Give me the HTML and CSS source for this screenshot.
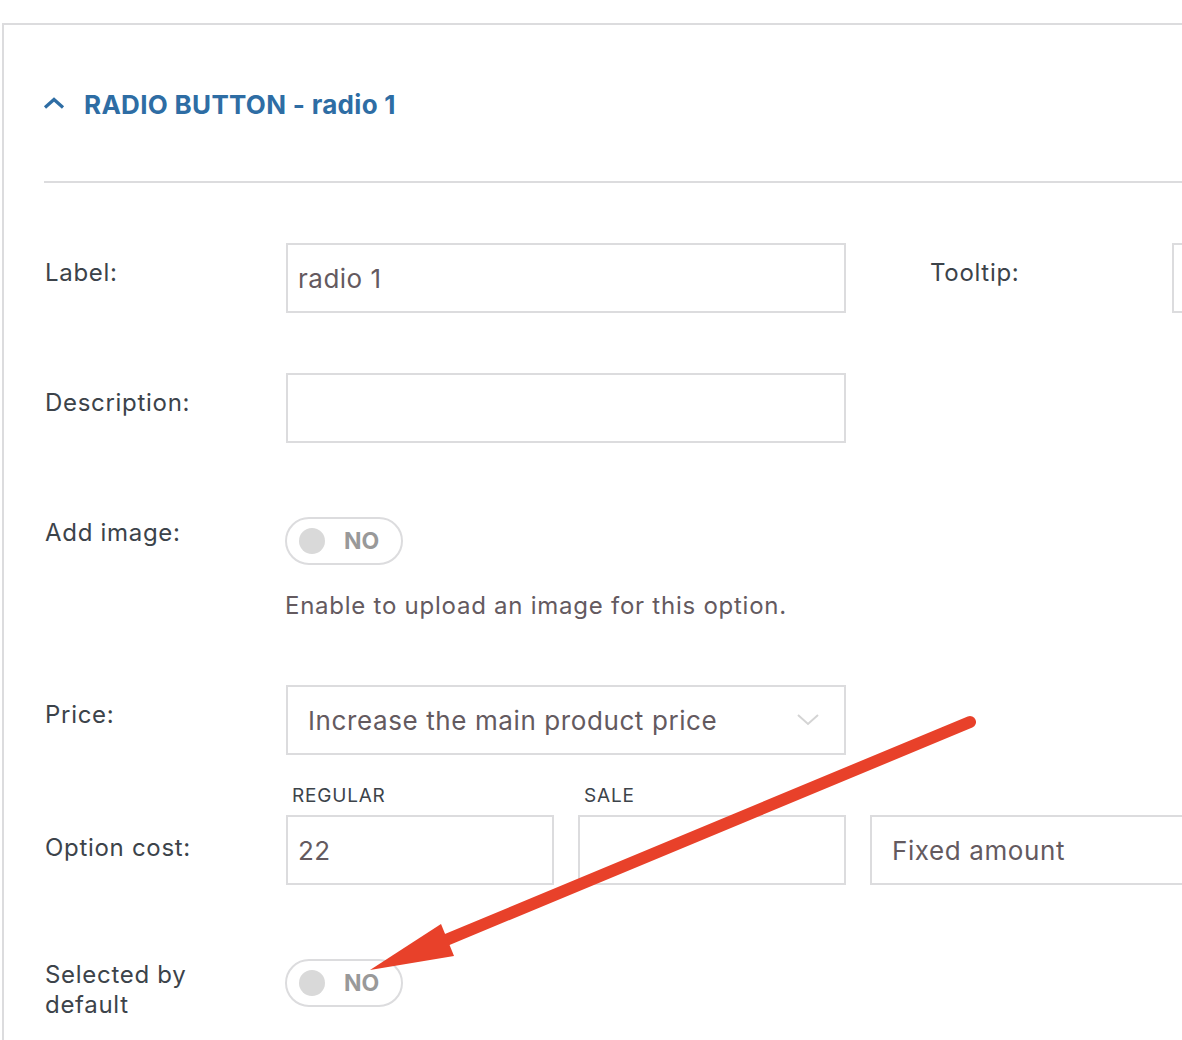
FILE: index.html
```html
<!DOCTYPE html>
<html lang="en">
<head>
  <meta charset="UTF-8" />
  <meta name="viewport" content="width=device-width, initial-scale=1.0"/>
  <title>Option - radio 1</title>
  <link rel="stylesheet" href="styles.css">
</head>
<body>

<div class="option-box">
  <div class="option-head">
    <svg class="option-toggle" width="22" height="12" viewBox="0 0 22 12">
      <polyline points="2,10.5 11,2.5 20,10.5" fill="none" stroke="currentColor" stroke-width="3.2" stroke-linejoin="miter"/>
    </svg>
    <span class="option-title">RADIO BUTTON - radio 1</span>
  </div>

  <div class="option-body">
    <div class="field-row row-first">
      <label class="field-label">Label:</label>
      <div class="field-input">radio 1</div>
      <label class="field-label side-label">Tooltip:</label>
      <div class="field-input"></div>
    </div>

    <div class="field-row row-normal">
      <label class="field-label">Description:</label>
      <div class="field-input"></div>
    </div>

    <div class="field-row row-switch">
      <label class="field-label">Add image:</label>
      <div class="field-stack">
        <div class="switch"><span class="switch-knob"></span><span class="switch-text">NO</span></div>
        <div class="field-help">Enable to upload an image for this option.</div>
      </div>
    </div>

    <div class="field-row row-price">
      <label class="field-label">Price:</label>
      <div class="field-select">
        <span>Increase the main product price</span>
        <svg width="24" height="14" viewBox="0 0 24 14">
          <polyline points="2,2 12,11 22,2" fill="none" stroke="currentColor" stroke-width="2"/>
        </svg>
      </div>
    </div>

    <div class="field-row row-cost">
      <label class="field-label">Option cost:</label>
      <div class="cost-group">
        <div class="cost-item">
          <div class="cost-caption">REGULAR</div>
          <div class="field-input">22</div>
        </div>
        <div class="cost-item">
          <div class="cost-caption">SALE</div>
          <div class="field-input"></div>
        </div>
        <div class="cost-item cost-type">
          <div class="cost-caption">&nbsp;</div>
          <div class="field-select">Fixed amount</div>
        </div>
      </div>
    </div>

    <div class="field-row row-switch row-last">
      <label class="field-label">Selected by<br>default</label>
      <div class="switch"><span class="switch-knob"></span><span class="switch-text">NO</span></div>
    </div>
  </div>
</div>

<!-- callout arrow pointing at the default switch -->
<svg class="callout" width="1182" height="1040" viewBox="0 0 1182 1040">
  <line x1="970" y1="722" x2="446" y2="940" stroke="#e8412a" stroke-width="12" stroke-linecap="round"/>
  <polygon points="370,970 441,924 454,956" fill="#e8412a"/>
</svg>

</body>
</html>
```

FILE: styles.css
```css
* {
  margin: 0; padding: 0; box-sizing: border-box;
}

body {
  font-family: Inter, 'Noto Sans', sans-serif;
  background: #fff;
  color: #3c434a;
  overflow: hidden;
  height: 1040px;
  position: relative;
}

.option-box {
  margin: 23px 0 0 2px;
  width: 1400px;
  border: 2px solid #dcdcde;
  border-right: none;
  border-bottom: none;
  padding: 0 0 60px 40px;
}

.option-head {
  display: flex;
  align-items: center;
  gap: 19px;
  height: 158px;
  border-bottom: 2px solid #dcdcde;
  color: #2e6da4;
  padding-top: 2px;
}

.option-toggle {
  margin-left: -1px;
  margin-top: -3px;
}

.option-title {
  font-size: 26px;
  font-weight: 700;
  letter-spacing: 0.3px;
}

.field-row {
  display: flex;
  align-items: flex-start;
}

.row-first { margin-top: 60px; }
.row-normal { margin-top: 60px; }
.row-switch { margin-top: 74px; }
.row-price { margin-top: 64px; }
.row-cost { margin-top: 30px; }

.field-label {
  width: 242px;
  flex-shrink: 0;
  font-size: 24px;
  line-height: 30px;
  letter-spacing: 0.7px;
  padding-top: 15px;
  padding-left: 1px;
  color: #3c434a;
}

.row-switch .field-label {
  padding-top: 1px;
}

.side-label {
  margin-left: 83px;
  width: 243px;
}

.field-input,
.field-select {
  flex-shrink: 0;
  width: 560px;
  height: 70px;
  border: 2px solid #dcdcde;
  background: #fff;
  font-size: 26px;
  letter-spacing: 0.5px;
  color: #645a5f;
  display: flex;
  align-items: center;
  padding: 0 10px;
}

.field-select {
  justify-content: space-between;
  padding: 0 24px 0 20px;
  letter-spacing: 0.6px;
}

.field-select svg {
  color: #d4d4d4;
}

.field-stack {
  display: flex;
  flex-direction: column;
  gap: 26px;
}

.field-help {
  font-size: 24px;
  line-height: 30px;
  letter-spacing: 0.75px;
  color: #645a5f;
  margin-left: -1px;
}

.switch {
  width: 118px;
  height: 48px;
  border: 2px solid #dcdcde;
  border-radius: 24px;
  display: flex;
  align-items: center;
  margin-left: -1px;
}

.switch-knob {
  width: 26px;
  height: 26px;
  border-radius: 50%;
  background: #d9d9d9;
  margin-left: 12px;
}

.switch-text {
  margin-left: 19px;
  font-size: 23px;
  font-weight: 700;
  color: #999;
}

.row-cost .field-label {
  padding-top: 48px;
}

.cost-group {
  display: flex;
  gap: 24px;
}

.cost-item .field-input {
  width: 268px;
}

.cost-type .field-select {
  width: 340px;
}

.cost-caption {
  font-size: 19px;
  line-height: 22px;
  letter-spacing: 0.8px;
  padding-left: 6px;
  margin-bottom: 8px;
  color: #3c434a;
}

.callout {
  position: absolute;
  top: 0;
  left: 0;
  pointer-events: none;
}
```
